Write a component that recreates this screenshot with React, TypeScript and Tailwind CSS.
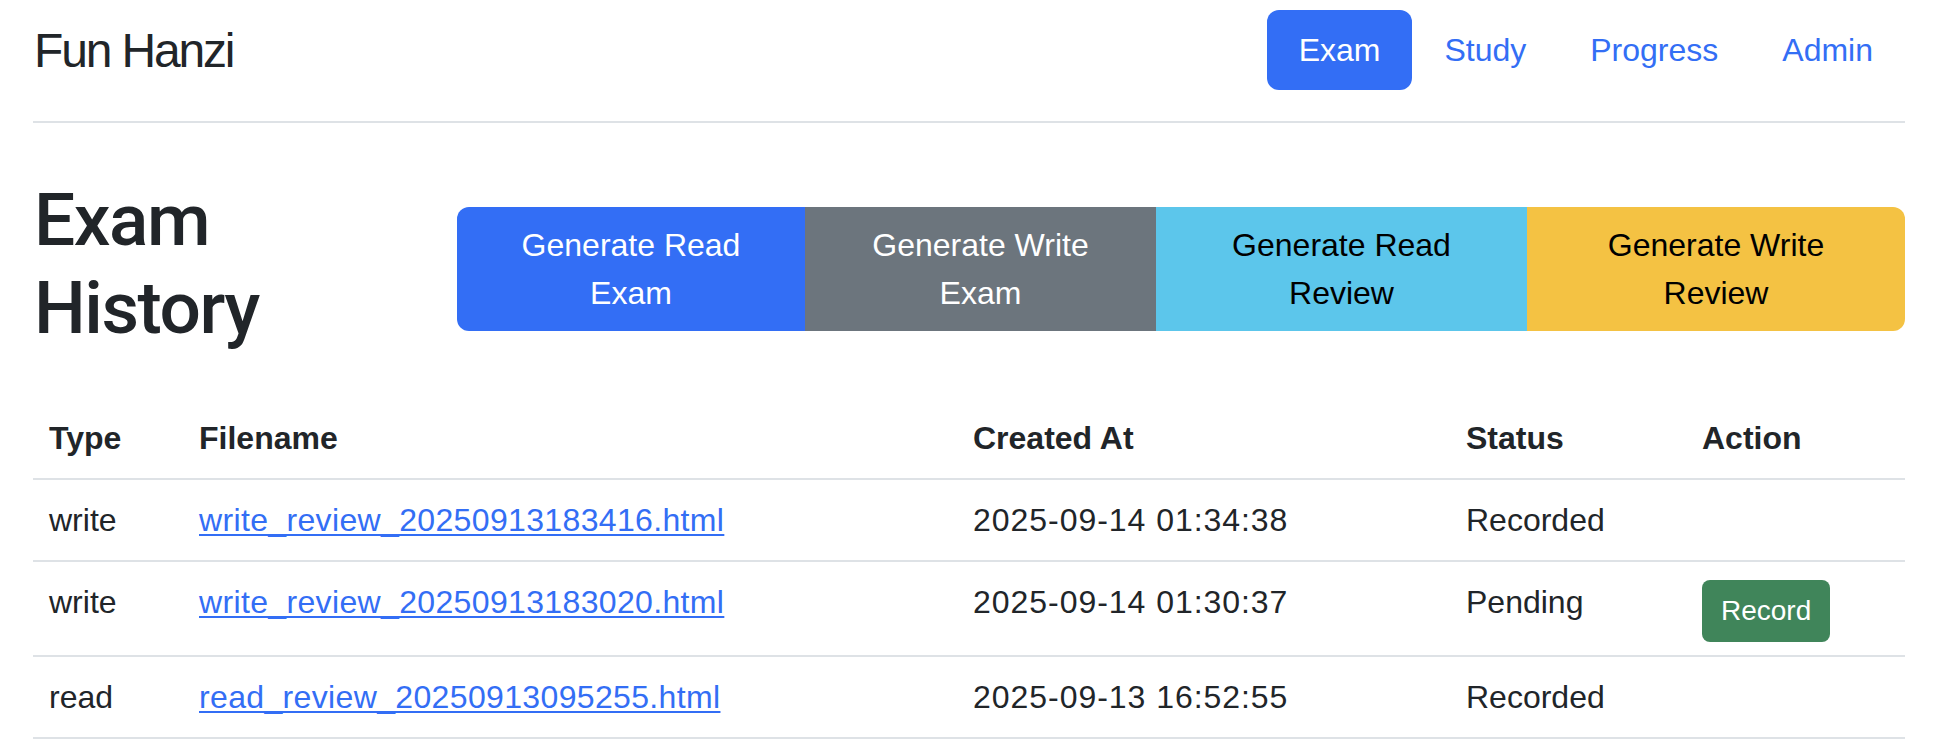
import React from "react";

const rows = [
  { type: "write", file: "write_review_20250913183416.html", created: "2025-09-14 01:34:38", status: "Recorded", action: false },
  { type: "write", file: "write_review_20250913183020.html", created: "2025-09-14 01:30:37", status: "Pending", action: true },
  { type: "read", file: "read_review_20250913095255.html", created: "2025-09-13 16:52:55", status: "Recorded", action: false },
];

export default function App() {
  return (
    <div
      className="min-h-screen bg-white text-[#212529] pl-[33px] pr-[43px]"
      style={{ fontFamily: '"Liberation Sans", Arial, sans-serif' }}
    >
      {/* Header */}
      <header className="flex items-center justify-between pt-[10px] pb-[31px] border-b-2 border-[#dee2e6]">
        <div className="text-[48px] leading-[72px] tracking-[-0.045em] pl-[1px] mt-[2px]">Fun Hanzi</div>
        <nav className="flex">
          <a className="px-[32px] py-[16px] text-[32px] leading-[48px] rounded-[12px] bg-[#336ef5] text-white">Exam</a>
          <a className="px-[32px] py-[16px] text-[32px] leading-[48px] rounded-[12px] text-[#336ef5]">Study</a>
          <a className="px-[32px] py-[16px] text-[32px] leading-[48px] rounded-[12px] text-[#336ef5]">Progress</a>
          <a className="px-[32px] py-[16px] text-[32px] leading-[48px] rounded-[12px] text-[#336ef5]">Admin</a>
        </nav>
      </header>

      {/* Title row */}
      <div className="flex items-start mt-[53px]">
        <h1
          className="w-[424px] shrink-0 text-[73px] leading-[88px] font-medium tracking-[-0.02em] pl-[1px]"
          style={{ fontFamily: 'Roboto, "Liberation Sans", sans-serif' }}
        >
          Exam
          <br />
          History
        </h1>
        <div className="flex shrink-0 mt-[31px]">
          <button className="w-[348px] py-[14px] text-[32px] leading-[48px] text-white bg-[#336ef5] rounded-l-[12px] text-center">
            Generate Read<br />Exam
          </button>
          <button className="w-[351px] py-[14px] text-[32px] leading-[48px] text-white bg-[#6c757d] text-center">
            Generate Write<br />Exam
          </button>
          <button className="w-[371px] py-[14px] text-[32px] leading-[48px] text-black bg-[#5cc6eb] text-center">
            Generate Read<br />Review
          </button>
          <button className="w-[378px] py-[14px] text-[32px] leading-[48px] text-black bg-[#f4c243] rounded-r-[12px] text-center">
            Generate Write<br />Review
          </button>
        </div>
      </div>

      {/* Table */}
      <table className="w-full table-fixed border-collapse mt-[46px] text-[32px] leading-[48px]">
        <colgroup>
          <col className="w-[150px]" />
          <col className="w-[774px]" />
          <col className="w-[493px]" />
          <col className="w-[236px]" />
          <col />
        </colgroup>
        <thead>
          <tr className="border-b-2 border-[#dee2e6]">
            <th className="p-[16px] text-left font-bold align-top">Type</th>
            <th className="p-[16px] text-left font-bold align-top">Filename</th>
            <th className="p-[16px] text-left font-bold align-top">Created At</th>
            <th className="p-[16px] text-left font-bold align-top">Status</th>
            <th className="p-[16px] text-left font-bold align-top">Action</th>
          </tr>
        </thead>
        <tbody>
          {rows.map((r) => (
            <tr key={r.file} className="border-b-2 border-[#dee2e6]">
              <td className="p-[16px] align-top">{r.type}</td>
              <td className="p-[16px] align-top">
                <a className="text-[#336ef5] underline decoration-[2px] underline-offset-[3px] tracking-[0.35px]">{r.file}</a>
              </td>
              <td className="p-[16px] align-top tracking-[0.03em]">{r.created}</td>
              <td className="p-[16px] align-top">{r.status}</td>
              <td className="p-[16px] align-top">
                {r.action && (
                  <button className="mt-[2px] mb-[-3px] px-[19px] py-[10px] text-[28px] leading-[42px] text-white bg-[#40855a] rounded-[8px] block">
                    Record
                  </button>
                )}
              </td>
            </tr>
          ))}
        </tbody>
      </table>
    </div>
  );
}
